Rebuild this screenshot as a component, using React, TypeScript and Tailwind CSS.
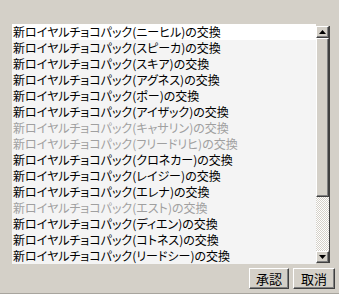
import React from 'react'

interface Item {
  name: string
  disabled?: boolean
}

const ITEMS: Item[] = [
  { name: 'ニーヒル' },
  { name: 'スピーカ' },
  { name: 'スキア' },
  { name: 'アグネス' },
  { name: 'ポー' },
  { name: 'アイザック' },
  { name: 'キャサリン', disabled: true },
  { name: 'フリードリヒ', disabled: true },
  { name: 'クロネカー' },
  { name: 'レイジー' },
  { name: 'エレナ' },
  { name: 'エスト', disabled: true },
  { name: 'ディエン' },
  { name: 'コトネス' },
  { name: 'リードシー' },
]

function Arrow({ up }: { up?: boolean }) {
  return (
    <svg width="7" height="4" viewBox="0 0 7 4" className="block">
      {up ? <polygon points="3.5,0 7,4 0,4" fill="#000" /> : <polygon points="0,0 7,0 3.5,4" fill="#000" />}
    </svg>
  )
}

const raised =
  'border-t border-l border-t-[#ffffff] border-l-[#ffffff] border-r border-b border-r-[#404040] border-b-[#404040] shadow-[inset_-1px_-1px_0_#808080,inset_1px_1px_0_#d4d0c8] bg-[#d4d0c8]'

export default function App() {
  return (
    <div
      className="w-[339px] h-[294px] bg-[#d4d0c8] flex flex-col border-b border-b-[#a8a59e]"
      style={{ fontFamily: '"Noto Sans CJK JP", "Noto Sans", sans-serif', fontFeatureSettings: '"palt"' }}
    >
      {/* List box */}
      <div className="mt-[24px] ml-[12px] w-[318px] h-[240px] flex">
        <div className="w-[304px] bg-[#f4f4f4] flex flex-col">
          {ITEMS.map((item, i) => (
            <div
              key={item.name}
              className={`h-[16px] leading-[16px] pl-[1px] text-[12px] whitespace-nowrap ${
                i === 0 ? 'bg-white' : ''
              } ${item.disabled ? 'text-[#a0a0a0]' : 'text-black'}`}
            >
              新ロイヤルチョコパック({item.name})の交換
            </div>
          ))}
        </div>

        {/* Scrollbar */}
        <div className="w-[14px] mt-[2px] h-[237px] flex flex-col border-r border-r-[#404040]">
          <div className={`h-[12px] flex items-center justify-center ${raised}`}>
            <Arrow up />
          </div>
          <div className={`h-[159px] ${raised}`} />
          <div className="flex-1 bg-[repeating-conic-gradient(#d4d0c8_0_25%,#ffffff_0_50%)] bg-[length:2px_2px]" />
          <div className={`h-[12px] flex items-center justify-center ${raised}`}>
            <Arrow />
          </div>
        </div>
      </div>

      {/* Buttons */}
      <div className="flex justify-end gap-[4px] mt-[4px] pr-[4px]">
        <button className={`w-[40px] h-[21px] text-[13px] leading-none text-black ${raised}`}>承認</button>
        <button className={`w-[42px] h-[21px] text-[13px] leading-none text-black ${raised}`}>取消</button>
      </div>
    </div>
  )
}
